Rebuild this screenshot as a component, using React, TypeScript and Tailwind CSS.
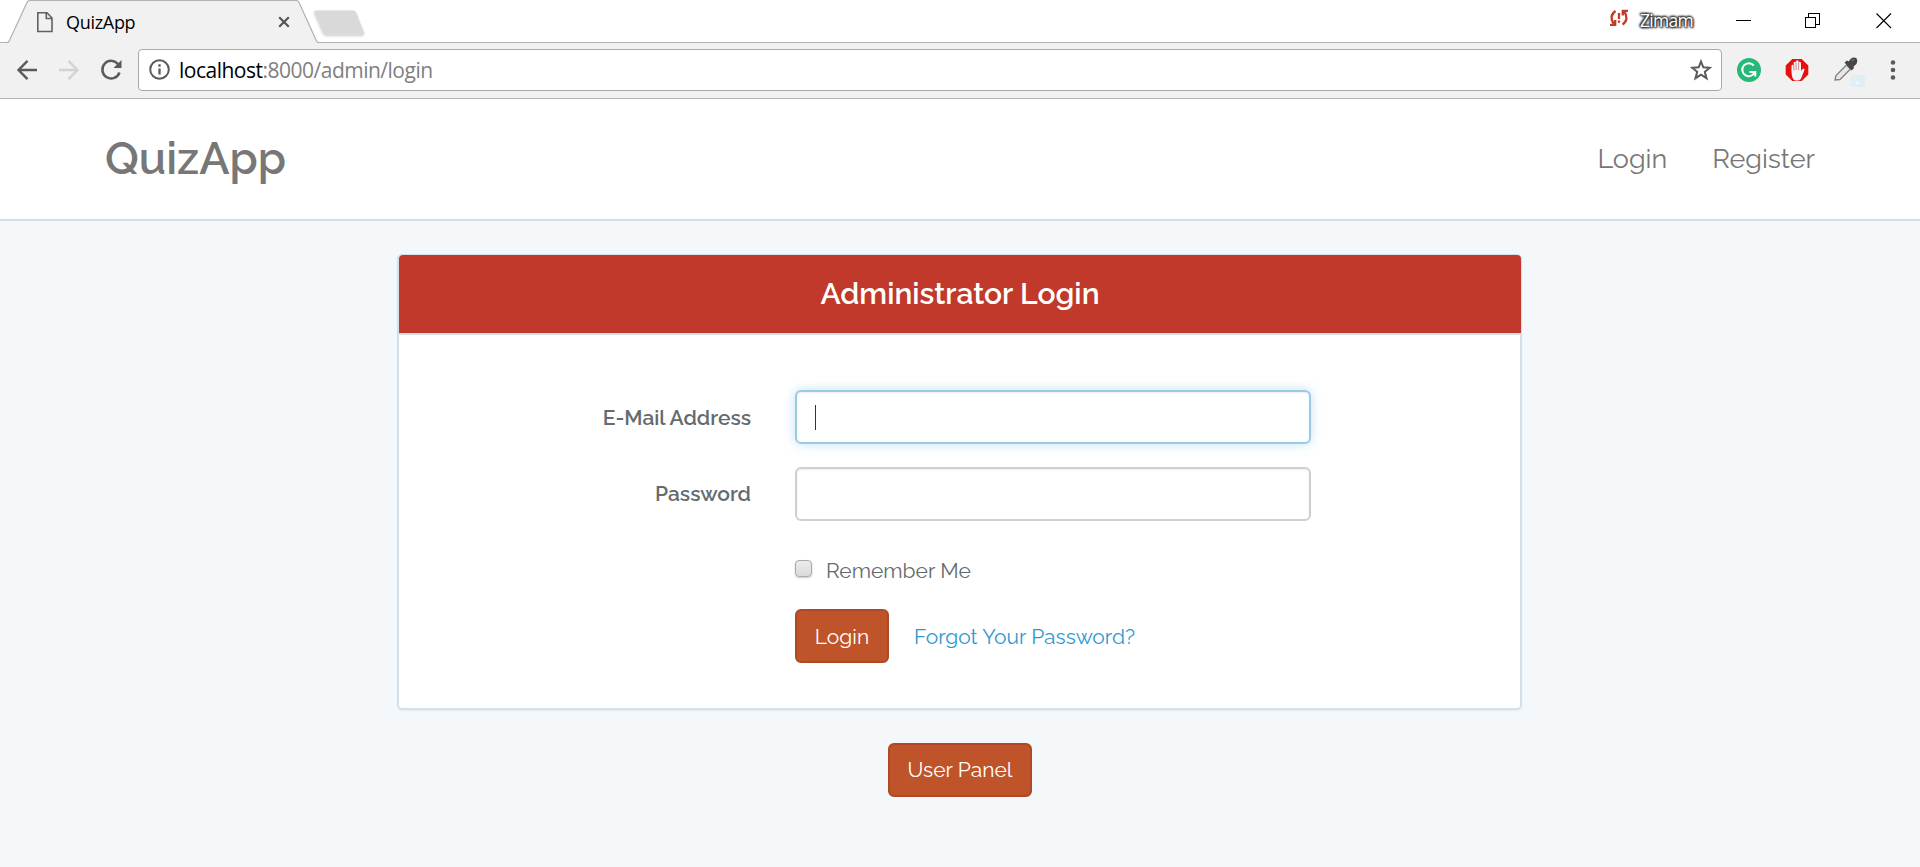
import React from "react";

const raleway = "font-['Raleway','Lato',sans-serif]";
const segoe = "font-['Segoe_UI','Open_Sans',sans-serif]";

function TabStrip() {
  return (
    <div className="relative h-[43px] w-full bg-white">
      <svg className="absolute left-0 top-0" width="1920" height="43" viewBox="0 0 1920 43" fill="none">
        <defs>
          <filter id="tabShadow" x="-10%" y="-10%" width="120%" height="140%">
            <feDropShadow dx="0" dy="1.2" stdDeviation="0.8" floodColor="#000" floodOpacity="0.25" />
          </filter>
        </defs>
        <path d="M7 43L9.5 41L27 2.5Q28 .5 30 .5H296Q298 .5 299 2.5L316 41L319 43Z" fill="#f1f1f1" />
        <path d="M0 42.5H7Q8.500 42.500 9.200 41L27 2.500Q28 .5 30 .5H296Q298 .5 299 2.500L316.500 41Q317.200 42.500 319 42.500H1920" stroke="#b1b1b1" strokeWidth="1.2" />
        <path d="M316 10.500H353Q355 10.500 356 12.500L364 32.500Q364.500 34.500 362.500 34.500H326Q324 34.500 323 32.500L314.300 12.500Q313.500 10.500 316 10.500Z" fill="#d9d9d9" filter="url(#tabShadow)" />
      </svg>
      <div className="relative flex h-full items-center pl-9">
        <svg width="18" height="22" viewBox="0 0 18 22" fill="none" stroke="#616161" strokeWidth="1.6">
          <path d="M1.800 1.800H11L16 7V20.500H1.800Z" />
          <path d="M10.300 1.800V7.500H16" />
        </svg>
        <span className={`${segoe} ml-3 w-[212px] text-[18px] leading-6 tracking-[-0.3px] text-black`}>QuizApp</span>
        <svg width="12" height="12" viewBox="0 0 12 12" stroke="#555" strokeWidth="2.200">
          <path d="M1.200 1.200L10.800 10.800M10.800 1.200L1.200 10.800" />
        </svg>
        <svg className="mb-[7px] ml-auto" width="20" height="18" viewBox="0 0 20 18" fill="none" stroke="#c53929" strokeWidth="2.300">
          <path d="M6.500 2C1.500 5.500 1.500 10.500 5 15.200M1 15.800H6.200V11" />
          <path d="M13.500 15.700C18.500 12 18.500 7 15 2.300M19 1.800H13.800V6.500" />
          <path d="M10 4V10M10 11.500V13.700" />
        </svg>
        <span className={`${segoe} ml-[11px] w-[54px] pb-[3px] text-[17.5px] leading-6 tracking-[-0.7px] text-white [text-shadow:0_0_2px_#333,0_0_2px_#333,0_0_3px_#333,1px_1px_2px_#333,-1px_-1px_2px_#333,0_0_3px_#333]`}>Zimam</span>
        <svg className="mb-[3px] ml-10 mr-3" width="174" height="20" viewBox="1734 10 174 20" fill="none" stroke="#000" shapeRendering="crispEdges">
          <path d="M1736 20.500H1751" />
          <path d="M1805.500 17.500H1815.500V27.500H1805.500ZM1808.500 17V13.500H1819.500V24.500H1816" />
          <path d="M1876.500 13.500L1891 28M1891 13.500L1876.500 28" shapeRendering="auto" strokeWidth="1.100" />
        </svg>
      </div>
    </div>
  );
}

function Toolbar() {
  return (
    <div className="flex h-14 items-center border-b border-[#b3b3b3] bg-[#f1f1f1] pb-0.5 pl-4 pr-6">
      <svg width="22" height="22" viewBox="0 0 22 22" fill="none" stroke="#5a5a5a" strokeWidth="2.400">
        <path d="M21 11H3M11.500 1.800L2.500 11L11.500 20.200" />
      </svg>
      <svg className="ml-5" width="22" height="22" viewBox="0 0 22 22" fill="none" stroke="#d2d2d2" strokeWidth="2.400">
        <path d="M1 11H19M10.500 1.800L19.500 11L10.500 20.200" />
      </svg>
      <svg className="ml-5" width="22" height="22" viewBox="0 0 22 22" fill="none" stroke="#5a5a5a" strokeWidth="2.500">
        <path d="M18.300 5.500A8.800 8.800 0 1 0 19.500 13.500" />
        <path d="M21.500 1V9H13.500Z" fill="#5a5a5a" stroke="none" />
      </svg>
      <div className="ml-4 flex h-[42px] w-[1584px] shrink-0 items-center rounded-[4px] border border-[#a9a9a9] bg-white pl-2.5 pr-[9px]">
        <svg width="21" height="21" viewBox="0 0 21 21" fill="none" stroke="#5a5a5a" strokeWidth="2">
          <circle cx="10.500" cy="10.500" r="9.300" />
          <path d="M10.500 9.500V15.500M10.500 5.300V7.700" strokeWidth="2.300" />
        </svg>
        <span className={`${segoe} ml-[9px] text-[21px] leading-7 tracking-[-0.5px] text-black`}>
          localhost<span className="text-[#808080]">:8000/admin/login</span>
        </span>
        <svg className="ml-auto" width="22" height="22" viewBox="0 0 22 22" fill="none" stroke="#5a5a5a" strokeWidth="2">
          <path d="M11 2.500L13.300 8.300L19.800 8.800L14.800 12.800L16.500 19.200L11 15.600L5.500 19.200L7.200 12.800L2.200 8.800L8.700 8.300Z" />
        </svg>
      </div>
      <svg className="ml-[15px]" width="24" height="24" viewBox="0 0 24 24" fill="none">
        <circle cx="12" cy="12" r="12" fill="#25b877" />
        <path d="M16.800 7.500A6.500 6.500 0 1 0 17.800 14.200" stroke="#fff" strokeWidth="2" />
        <path d="M12.500 14H18.300V18.500" stroke="#fff" strokeWidth="2" />
      </svg>
      <svg className="ml-6" width="24" height="24" viewBox="0 0 24 24">
        <path d="M7.300 1H16.700L23.300 7.500V16.500L16.700 23H7.300L.7 16.500V7.500Z" fill="#e3120f" />
        <path d="M6.500 14V7.500Q7.500 6 8.700 7.300V4.500Q9.800 3 11 4.200V3Q12.300 1.500 13.500 3V4.200Q15 3.200 16 4.800V13L17.800 10.800Q19.600 10.200 19.500 11.800L16.500 19.500Q15.500 22.500 13 22.500H11Q8 22.500 7 18Z" fill="#f4f4f4" />
        <path d="M8.800 7V12.500M11.100 4.500V12M13.600 4.500V12" stroke="#d86a6a" strokeWidth=".8" />
      </svg>
      <svg className="ml-6" width="34" height="34" viewBox="0 0 34 34">
        <rect x="17.500" y="22" width="15" height="12" fill="#e1eff5" />
        <path d="M2 27L3 22.500L13.500 12L17.500 16L7 26.500Z" fill="#e8e8e8" stroke="#858585" strokeWidth="1.400" />
        <path d="M11.500 9.500L14 7.500L15.500 8.500L18 5.500Q21 3.500 23.700 5.500Q25.200 8.500 23.500 11L20.500 13.500L21 15L18.500 17.500Z" fill="#474747" />
        <path d="M18.500 7.500L21 6.500" stroke="#888" />
        <rect x="23.500" y="29" width="2" height="2" fill="#fff" />
      </svg>
      <svg className="ml-auto" width="6" height="22" viewBox="0 0 6 22" fill="#5a5a5a">
        <circle cx="3" cy="3.500" r="2.300" />
        <circle cx="3" cy="11" r="2.300" />
        <circle cx="3" cy="18.500" r="2.300" />
      </svg>
    </div>
  );
}

function Navbar() {
  return (
    <nav className="flex h-[122px] items-center justify-between border-b-2 border-[#d3e0e9] bg-white pl-[105px] pr-[105px] text-[#777]">
      <a className="text-[45px] font-semibold leading-[54px]">QuizApp</a>
      <div className="flex gap-[45px] pb-px text-[27px] leading-9">
        <a>Login</a>
        <a>Register</a>
      </div>
    </nav>
  );
}

function LoginPanel() {
  return (
    <section className="mr-px w-[1125px] rounded-[5px] border-2 border-t border-[#d3e0e9] bg-white shadow-[0_1px_2px_rgba(0,0,0,0.06)]">
      <h1 className="-mr-px flex h-[78px] items-center justify-center rounded-t-[4px] bg-[#c0392b] pb-0.5 text-[30px] font-semibold text-white">
        Administrator Login
      </h1>
      <form className="grid h-[375px] grid-cols-[351px_516px] content-start gap-x-[45px] border-t-2 border-[#d3e0e9] pt-[55px] text-[21px] leading-[30px] text-[#636b6f]">
        <label className="-mr-px flex h-[54px] items-center justify-end pt-0.5 font-semibold">E-Mail Address</label>
        <div className="flex h-[54px] items-center rounded-[6px] border-2 border-[#98cbe8] bg-white pl-[18px] shadow-[inset_0_1px_2px_rgba(0,0,0,0.08),0_0_11px_rgba(152,203,232,0.6)]">
          <span className="h-[25px] w-px bg-[#333]" />
        </div>
        <label className="-mr-px mt-[23px] flex h-[54px] items-center justify-end font-semibold">Password</label>
        <div className="mt-[23px] h-[54px] rounded-[6px] border-2 border-[#ccd0d2] bg-white shadow-[inset_0_1px_2px_rgba(0,0,0,0.08)]" />
        <div className="col-start-2 mt-[35px] flex h-[30px] items-center">
          <span className="mb-[5px] h-[17px] w-[17px] rounded-[4px] border border-[#aaa] bg-linear-to-b from-[#ececec] to-[#dadada] shadow-[0_1px_2px_rgba(0,0,0,0.2)]" />
          <span className="ml-3.5">Remember Me</span>
        </div>
        <div className="col-start-2 mt-[23px] flex h-[54px] items-center">
          <button className="h-[54px] w-[94px] rounded-[6px] border-2 border-[#ab4a25] bg-[#bf5329] pt-0.5 text-white">Login</button>
          <a className="ml-[25px] pt-0.5 text-[#3097d1]">Forgot Your Password?</a>
        </div>
      </form>
    </section>
  );
}

export default function App() {
  return (
    <div className={`${raleway} h-[867px] w-[1920px] overflow-hidden bg-[#f5f8fa]`}>
      <TabStrip />
      <Toolbar />
      <Navbar />
      <main className="flex flex-col items-center pt-[33px]">
        <LoginPanel />
        <button className="mt-[33px] h-[54px] w-36 rounded-[6px] border-2 border-[#ab4a25] bg-[#bf5329] text-[21px] text-white">User Panel</button>
      </main>
    </div>
  );
}
